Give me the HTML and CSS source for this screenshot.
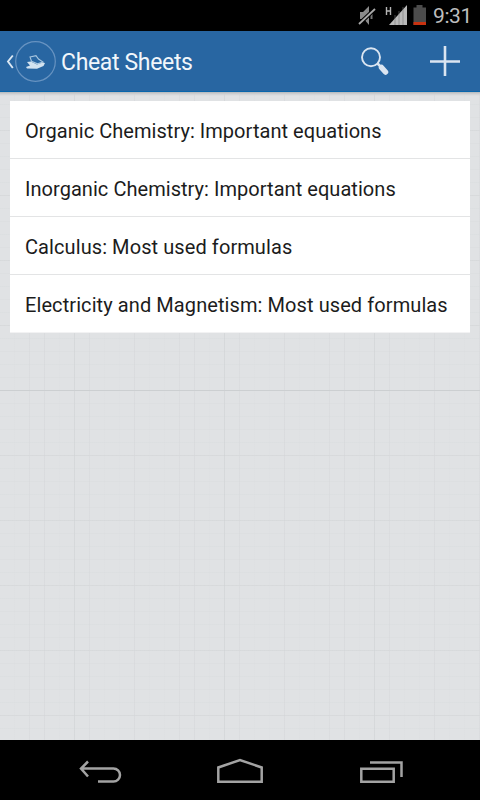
FILE: index.html
```html
<!DOCTYPE html>
<html lang="en">
<head>
<meta charset="utf-8">
<title>Cheat Sheets</title>
<link rel="stylesheet" href="styles.css">
</head>
<body>
<div class="status">
  <svg width="75" height="31" viewBox="0 0 75 31" aria-hidden="true">
    <path d="M2 12h3l6-6v19l-5-6H2z" fill="#8b8b8b"/>
    <path d="M13.500 11v8" stroke="#777" stroke-width="2"/>
    <path d="M1 24L17 9" stroke="#000" stroke-width="4"/>
    <path d="M1 24L17 9" stroke="#aaa" stroke-width="1.800"/>
    <path d="M28.500 7v8M32.500 7v8M28 11h5" stroke="#b5b5b5" stroke-width="1.400" fill="none"/>
    <path d="M31 25L49 5v20z" fill="#b9b9b9"/>
    <path d="M37 15v10M41 11v14M45 7v18" stroke="#777" stroke-width=".6"/>
    <path d="M58.500 5h6v2.500h3.500V25H55.500V7.500h3z" fill="#4c4c4c"/>
    <path d="M55.500 22H68v3H55.500z" fill="#c93210"/>
  </svg>
  <span class="clock">9:31</span>
</div>
<header class="bar">
  <svg width="56" height="60" viewBox="0 0 56 60" fill="none" aria-hidden="true">
    <path d="M12.800 24.500L8 30.500l4.800 6.500" stroke="#dce8f3" stroke-width="1.900"/>
    <circle cx="35.500" cy="30.500" r="19.800" stroke="#6793c1" stroke-width="1.200"/>
    <path d="M27 31l4-.5 6 3 5-2 3 .5-1.500 3-6.500 2.800-10-.3-1-1.500 4-1.500z" fill="#d3e3f0"/>
    <path d="M30 26l6-1.300 2.500 3.300 4.500 3-5.500 1.800-6-2.500z" fill="#2866a2" stroke="#a9c7e0" stroke-width="1.100"/>
  </svg>
  <h1>Cheat Sheets</h1>
  <svg width="120" height="60" viewBox="0 0 120 60" fill="none" aria-hidden="true">
    <circle cx="11" cy="26.300" r="9" stroke="#dbe5f1" stroke-width="1.900"/>
    <path d="M17.500 32.500l4 4" stroke="#dbe5f1" stroke-width="2.500"/>
    <path d="M21.500 36.500l4 4.500" stroke="#dbe5f1" stroke-width="5.500" stroke-linecap="round"/>
    <path d="M85 15v30M70 30.500h30" stroke="#dbe5f1" stroke-width="2.600"/>
  </svg>
</header>
<main>
  <ul>
    <li class="t1">Organic Chemistry: Important equations</li>
    <li class="t2">Inorganic Chemistry: Important equations</li>
    <li class="t3">Calculus: Most used formulas</li>
    <li class="t4">Electricity and Magnetism: Most used formulas</li>
  </ul>
</main>
<nav>
  <svg width="44" height="24" viewBox="0 0 44 24" aria-hidden="true"><path d="M2 8.500h32.500a6.500 6.500 0 0 1 0 13H19M9 1.500l-7 7 7 8"/></svg>
  <svg width="46" height="26" viewBox="0 0 46 26" aria-hidden="true"><path d="M1.300 23.700V9.500L23 2l21.700 7.500v14.200z"/></svg>
  <svg width="43" height="22" viewBox="0 0 43 22" aria-hidden="true"><path d="M1.300 7.800h32.400v12.900H1.300zM10 1.400h31.500V16"/></svg>
</nav>
</body>
</html>
```
FILE: styles.css
```css
* { box-sizing: border-box; }
body {
  margin: 0;
  width: 480px;
  height: 800px;
  display: flex;
  flex-direction: column;
  overflow: hidden;
  font-family: Roboto, "Liberation Sans", sans-serif;
  background: #000;
}
svg { display: block; flex: none; }
.status {
  height: 31px;
  display: flex;
  align-items: center;
  justify-content: flex-end;
  padding-right: 9px;
}
.clock {
  width: 38px;
  font-size: 21px;
  line-height: 31px;
  padding-top: 1px;
  color: #bebebe;
  letter-spacing: -.4px;
  white-space: nowrap;
}
.bar {
  height: 61px;
  display: flex;
  background: #2866a2;
  border-bottom: 1px solid #0966ac;
}
h1 {
  margin: 0 0 0 5px;
  flex: 1;
  font-size: 23px;
  font-weight: 400;
  line-height: 63px;
  letter-spacing: -.34px;
  color: #f1f6fb;
  white-space: nowrap;
}
main {
  height: 648px;
  padding: 9px 10px;
  background-color: #e0e2e4;
  background-image:
    linear-gradient(#b4b8bb, #d0d2d5 2px, #dfe1e300 4px),
    linear-gradient(#cccfd1, #cccfd1),
    linear-gradient(90deg, transparent 29px, #d5d7d966 29px 30px, transparent 30px 44px, #d3d5d766 44px 45px, transparent 45px 74px, #cdd0d280 74px 75px, transparent 75px 89px, #d5d7d966 89px 90px, transparent 90px 134px, #d3d5d766 134px 135px, transparent 135px),
    linear-gradient(#d3d5d780 0 1px, transparent 1px),
    repeating-linear-gradient(90deg, transparent 0 14px, #d5d7da22 14px 15px),
    repeating-linear-gradient(#d5d7da44 0 1px, transparent 1px 13px);
  background-size: 100% 4px, 100% 1px, 150px 100%, 100% 65px, auto, auto;
  background-position: 0 0, 0 298px, 0 0, 0 38px, 0 0, 0 12px;
  background-repeat: no-repeat, no-repeat, repeat, repeat, repeat, repeat;
}
ul { margin: 0; padding: 0; list-style: none; background: #fff; }
li {
  height: 58px;
  padding-left: 15px;
  font-size: 20px;
  line-height: 60px;
  color: #1c1c1c;
  white-space: nowrap;
  border-bottom: 1px solid #e3e4e5;
}
li:last-child { border-bottom-color: #f2f2f3; }
.t1, .t2 { letter-spacing: .045px; }
.t3, .t4 { letter-spacing: .085px; }
nav {
  height: 60px;
  display: flex;
  align-items: flex-start;
  background: #000;
}
nav svg { fill: none; stroke: #a3a3a3; stroke-width: 2.500; }
nav svg:nth-child(1) { margin: 20px 0 0 79px; }
nav svg:nth-child(2) { margin: 18px 0 0 94px; }
nav svg:nth-child(3) { margin: 21px 0 0 97px; }
```
